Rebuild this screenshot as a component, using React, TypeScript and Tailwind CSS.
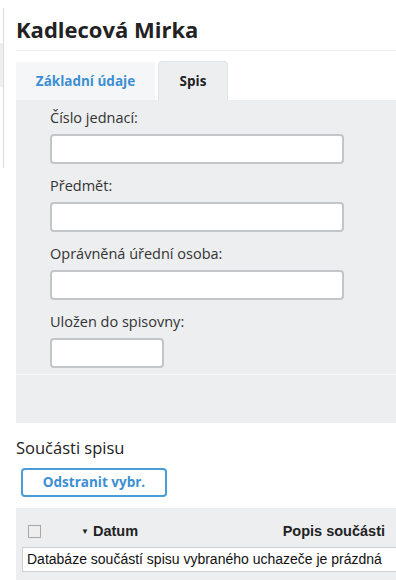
import React from 'react';

const fields = [
    { label: 'Číslo jednací:', wide: true },
    { label: 'Předmět:', wide: true },
    { label: 'Oprávněná úřední osoba:', wide: true },
    { label: 'Uložen do spisovny:', wide: false },
];

export default function App() {
    return (
        <div className="flex w-[396px] h-[580px] overflow-hidden bg-white text-[#333]" style={{ fontFamily: '"Open Sans", sans-serif' }}>
            {/* sidebar edge */}
            <div className="w-[4px] shrink-0 pt-[8px]">
                <div className="h-[160px] border-r border-[#dcdcdc] flex flex-col">
                    <div className="h-[35px]" />
                    <div className="h-[44px] bg-[#efefef]" />
                </div>
            </div>

            <div className="ml-[12px] flex-1 min-w-0">
                {/* Header */}
                <div className="h-[51px] border-b border-[#eeeeee] pt-[14px]">
                    <h1 className="text-[22px] leading-[30px] font-bold text-[#222]">Kadlecová Mirka</h1>
                </div>

                {/* Tabs */}
                <div className="flex items-end mt-[10px] h-[39px]">
                    <div className="w-[139px] h-[38px] bg-[#f5f6f7] flex items-center justify-center text-[13.5px] font-bold text-[#3b8fd2]">
                        Základní údaje
                    </div>
                    <div className="ml-[3px] w-[70px] h-[39px] bg-[#eceef0] rounded-t-[4px] border-t border-x border-[#e2e4e6] flex items-center justify-center text-[13.5px] font-bold text-[#222]">
                        Spis
                    </div>
                </div>

                {/* Form panel */}
                <div className="bg-[#eceef0]">
                    <div className="pl-[34px] pt-[8px] pb-[6px] border-b border-[#f6f7f8]">
                        {fields.map((f) => (
                            <div key={f.label} className="pb-[12px] last:pb-0">
                                <div className="h-[20px] leading-[20px] text-[14.5px] text-[#333]">{f.label}</div>
                                <div
                                    className={
                                        (f.wide ? 'w-[294px]' : 'w-[114px]') +
                                        ' mt-[6px] h-[30px] bg-white border-2 border-[#c3c6c9] rounded-[4px]'
                                    }
                                />
                            </div>
                        ))}
                    </div>
                    <div className="h-[48px]" />
                </div>

                {/* Součásti spisu */}
                <div className="mt-[14px] text-[16.5px] leading-[22px] text-[#222]">Součásti spisu</div>
                <button className="mt-[9px] ml-[5px] w-[146px] h-[29px] border-2 border-[#4a9ed8] rounded-[4px] bg-white text-[13.5px] font-bold text-[#3b8fd2]">
                    Odstranit vybr.
                </button>

                <div className="mt-[11px] bg-[#eceef0] h-[80px]" style={{ fontFamily: '"Liberation Sans", Arial, sans-serif' }}>
                    <div className="h-[39px] flex items-center pt-[8px] text-[14.5px] font-bold text-[#222]">
                        <div className="ml-[12px] w-[13px] h-[13px] border border-[#a8a8a8] bg-[#eeeeee]" />
                        <span className="ml-[40px] text-[8px]">▼</span>
                        <span className="ml-[4px]">Datum</span>
                        <span className="ml-auto mr-[11px]">Popis součásti</span>
                    </div>
                    <div className="ml-[6px] w-[390px] h-[25px] bg-white border border-[#cfcfcf] flex items-center pl-[4px] text-[14px] text-[#111] whitespace-nowrap">
                        Databáze součástí spisu vybraného uchazeče je prázdná
                    </div>
                </div>
            </div>
        </div>
    );
}
